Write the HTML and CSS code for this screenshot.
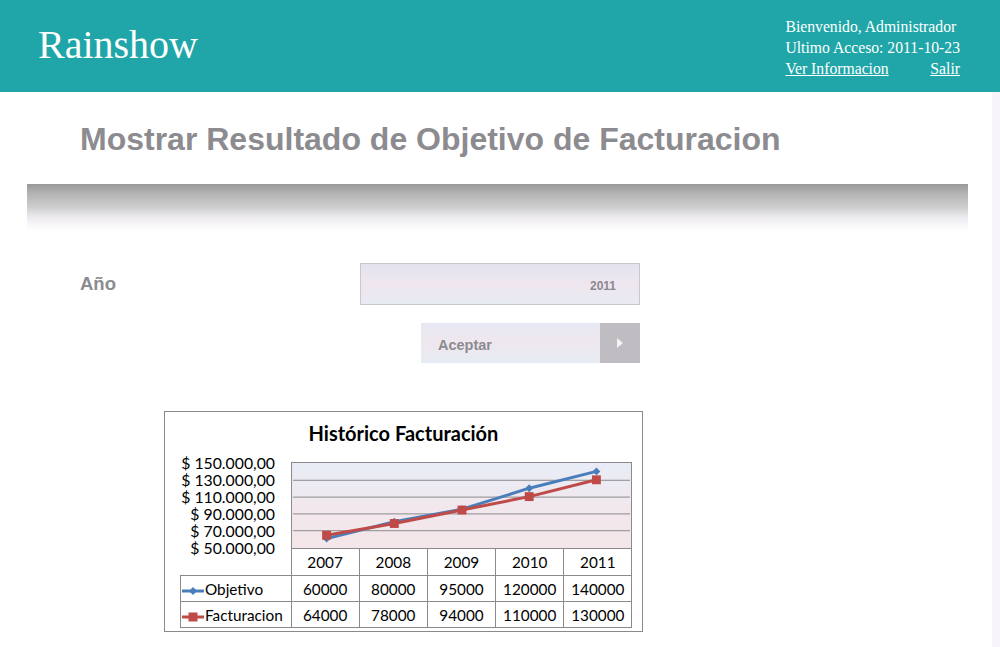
FILE: index.html
```html
<!DOCTYPE html>
<html lang="es">
<head>
<meta charset="utf-8">
<title>Rainshow</title>
<link rel="stylesheet" href="styles.css">
</head>
<body>
<header class="topbar">
  <div class="logo">Rainshow</div>
  <div class="user">
    <div>Bienvenido, Administrador</div>
    <div>Ultimo Acceso: 2011-10-23</div>
    <div class="links"><a href="#">Ver Informacion</a><a href="#">Salir</a></div>
  </div>
</header>
<main class="page">
  <h1 class="title">Mostrar Resultado de Objetivo de Facturacion</h1>
  <div class="band"></div>
  <div class="form-row">
    <label class="label">Año</label>
    <div class="field">2011</div>
  </div>
  <div class="btn-row">
    <button class="btn"><span class="btn-text">Aceptar</span><span class="btn-arrow"><svg width="8" height="12" viewBox="0 0 8 12"><path d="M1 1 L7 6 L1 11 Z" fill="#f4f4f6"/></svg></span></button>
  </div>
  <div class="chart">
    <div class="chart-title">Histórico Facturación</div>
    <div class="chart-body">
      <div class="yaxis">
        <span>$ 150.000,00</span>
        <span>$ 130.000,00</span>
        <span>$ 110.000,00</span>
        <span>$ 90.000,00</span>
        <span>$ 70.000,00</span>
        <span>$ 50.000,00</span>
      </div>
      <svg class="plot" width="341" height="86" viewBox="0 0 341 86">
        <g stroke="#8a8a8a" stroke-width="1">
          <line x1="0" y1="17.5" x2="341" y2="17.5"/>
          <line x1="0" y1="34.5" x2="341" y2="34.5"/>
          <line x1="0" y1="51.5" x2="341" y2="51.5"/>
          <line x1="0" y1="68.5" x2="341" y2="68.5"/>
        </g>
        <polyline points="34,76.5 102.5,59.5 171,46.75 239,25.5 307,8.5" fill="none" stroke="#4a7ebb" stroke-width="3"/>
        <g fill="#4a7ebb">
          <path d="M34 72.5 L38 76.5 L34 80.5 L30 76.5 Z"/>
          <path d="M102.5 55.5 L106.5 59.5 L102.5 63.5 L98.5 59.5 Z"/>
          <path d="M171 42.75 L175 46.75 L171 50.75 L167 46.75 Z"/>
          <path d="M239 21.5 L243 25.5 L239 29.5 L235 25.5 Z"/>
          <path d="M307 4.5 L311 8.5 L307 12.5 L303 8.5 Z"/>
        </g>
        <polyline points="34,73.1 102.5,61.2 171,47.6 239,34 307,17" fill="none" stroke="#be4b48" stroke-width="3"/>
        <g fill="#be4b48">
          <rect x="29.5" y="68.6" width="9" height="9"/>
          <rect x="98" y="56.7" width="9" height="9"/>
          <rect x="166.5" y="43.1" width="9" height="9"/>
          <rect x="234.5" y="29.5" width="9" height="9"/>
          <rect x="302.5" y="12.5" width="9" height="9"/>
        </g>
      </svg>
    </div>
    <table class="data">
      <tr class="years"><td class="blank"></td><td>2007</td><td>2008</td><td>2009</td><td>2010</td><td>2011</td></tr>
      <tr><td class="legend"><svg width="22" height="10" viewBox="0 0 22 10"><line x1="0" y1="5" x2="22" y2="5" stroke="#4a7ebb" stroke-width="3"/><path d="M11 1 L15 5 L11 9 L7 5 Z" fill="#4a7ebb"/></svg>Objetivo</td><td>60000</td><td>80000</td><td>95000</td><td>120000</td><td>140000</td></tr>
      <tr><td class="legend"><svg width="22" height="10" viewBox="0 0 22 10"><line x1="0" y1="5" x2="22" y2="5" stroke="#be4b48" stroke-width="3"/><rect x="6.5" y="0.5" width="9" height="9" fill="#be4b48"/></svg>Facturacion</td><td>64000</td><td>78000</td><td>94000</td><td>110000</td><td>130000</td></tr>
    </table>
  </div>
</main>
</body>
</html>
```
FILE: styles.css
```css
html, body {
  margin: 0;
  padding: 0;
  background: #ffffff;
}
body {
  width: 1000px;
  height: 647px;
  overflow: hidden;
}
.topbar {
  height: 92px;
  background: #20a6a8;
  display: flex;
  justify-content: space-between;
  align-items: flex-start;
  color: #ffffff;
  font-family: "Liberation Serif", "Times New Roman", serif;
}
.logo {
  font-size: 40px;
  line-height: 40px;
  margin: 25px 0 0 38px;
}
.user {
  font-size: 15.7px;
  line-height: 21px;
  white-space: nowrap;
  margin: 16px 40px 0 0;
}
.links {
  display: flex;
  justify-content: space-between;
}
.links a {
  color: #ffffff;
  text-decoration: underline;
}
.page {
  display: flex;
  flex-direction: column;
  align-items: flex-start;
  height: 555px;
  border-right: 8px solid #f7f5f9;
  box-sizing: border-box;
  width: 1000px;
  font-family: "Liberation Sans", Arial, sans-serif;
}
.title {
  margin: 29px 0 0 80px;
  font-size: 32px;
  line-height: 36px;
  font-weight: bold;
  color: #8c8b8f;
}
.band {
  margin: 27px 0 0 27px;
  width: 941px;
  height: 47px;
  background: linear-gradient(180deg, #999999 0%, #b3b3b3 20%, #cfcfcf 50%, #eeecf1 72%, #ffffff 100%);
}
.form-row {
  display: flex;
  align-items: center;
  margin: 32px 0 0 80px;
}
.label {
  width: 280px;
  font-size: 18.5px;
  font-weight: bold;
  color: #8c8b8f;
}
.field {
  width: 280px;
  height: 42px;
  box-sizing: border-box;
  border: 1px solid #c9c7cc;
  background: linear-gradient(180deg, #e3e4ee 0%, #efe6ee 50%, #e8eaf3 100%);
  display: flex;
  align-items: center;
  justify-content: flex-end;
  padding: 3px 23px 0 0;
  font-size: 12px;
  font-weight: bold;
  color: #8a898e;
}
.btn-row {
  margin: 18px 0 0 421px;
}
.btn {
  display: flex;
  width: 219px;
  height: 40px;
  padding: 0;
  border: 0;
  background: none;
  font-family: "Liberation Sans", Arial, sans-serif;
}
.btn-text {
  width: 179px;
  height: 40px;
  box-sizing: border-box;
  display: flex;
  align-items: center;
  padding: 3px 0 0 17px;
  background: linear-gradient(180deg, #e6e8f3 0%, #efe7ee 50%, #e6ebf4 100%);
  font-size: 14.5px;
  font-weight: bold;
  color: #8c8b8f;
}
.btn-arrow {
  width: 40px;
  height: 40px;
  background: #bfbdc1;
  display: flex;
  align-items: center;
  justify-content: center;
}
.chart {
  margin: 48px 0 0 164px;
  width: 479px;
  height: 221px;
  box-sizing: border-box;
  border: 1px solid #8a8a8a;
  background: #ffffff;
  font-family: Lato, "Liberation Sans", sans-serif;
  color: #000000;
}
.chart-title {
  text-align: center;
  font-size: 20px;
  font-weight: bold;
  line-height: 24px;
  padding: 9px 0 17px 0;
}
.chart-body {
  display: grid;
  grid-template-columns: 126px 341px;
  height: 86px;
}
.yaxis {
  display: flex;
  flex-direction: column;
  align-items: flex-end;
  margin-top: -8.5px;
  padding-right: 16px;
  font-size: 15.8px;
  line-height: 17px;
  white-space: nowrap;
}
.plot {
  display: block;
  box-sizing: border-box;
  border: 1px solid #8a8a8a;
  border-bottom: 0;
  background: linear-gradient(180deg, #e8ecf6 0%, #f1e8ee 50%, #f4e6e8 100%);
}
.data {
  border-collapse: collapse;
  margin-left: 15px;
  font-size: 15.3px;
  table-layout: fixed;
}
.data td {
  border: 1px solid #8a8a8a;
  width: 67.2px;
  height: 25px;
  padding: 0;
  text-align: center;
  white-space: nowrap;
}
.data tr.years td {
  height: 26px;
}
.data td.blank {
  border: 0;
  border-right: 1px solid #8a8a8a;
  width: 110px;
}
.data td.legend {
  text-align: left;
  padding-left: 1px;
}
.data td.legend svg {
  vertical-align: -1px;
  margin-right: 1px;
}
```
